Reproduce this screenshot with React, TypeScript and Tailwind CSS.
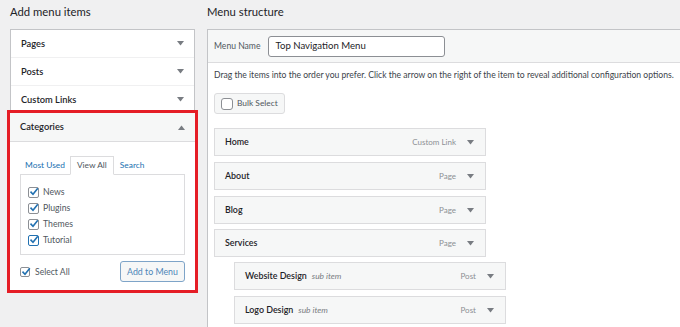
import React from "react";

type MenuItem = {
  title: string;
  type: string;
  sub?: boolean;
};

const menuItems: MenuItem[] = [
  { title: "Home", type: "Custom Link" },
  { title: "About", type: "Page" },
  { title: "Blog", type: "Page" },
  { title: "Services", type: "Page" },
  { title: "Website Design", type: "Post", sub: true },
  { title: "Logo Design", type: "Post", sub: true },
];

const categories = [
  { name: "News", focus: false },
  { name: "Plugins", focus: false },
  { name: "Themes", focus: false },
  { name: "Tutorial", focus: true },
];

const Arrow = ({ up = false }: { up?: boolean }) => (
  <svg width="7" height="5" viewBox="0 0 7 5" className="shrink-0">
    <path d={up ? "M0 5 L3.5 0.5 L7 5 Z" : "M0 0 L3.5 4.5 L7 0 Z"} fill="#787c82" />
  </svg>
);

const Check = ({ focus = false, size = 11 }: { focus?: boolean; size?: number }) => (
  <span
    className={`relative flex shrink-0 items-center justify-center rounded-[2px] bg-white ${focus ? "border-[1.5px] border-[#2271b1]" : "border border-[#8c8f94]"}`}
    style={{ width: size, height: size }}
  >
    <svg width="10" height="9" viewBox="0 0 10 9" className="absolute -top-[1px] left-[0px]">
      <path d="M1.5 4.6 L4 7.2 L8.8 1.3" stroke="#2271b1" strokeWidth="1.6" fill="none" />
    </svg>
  </span>
);

const AccordionRow = ({ label }: { label: string }) => (
  <div className="flex h-[28px] items-center justify-between border-b border-[#f0f0f1] pl-[10px] pr-[10px]">
    <span className="text-[9.3px] font-semibold text-[#1d2327]">{label}</span>
    <Arrow />
  </div>
);

const App = () => {
  return (
    <div
      className="flex h-[327px] w-[680px] overflow-hidden bg-[#f0f0f1] text-[#1d2327]"
      style={{ fontFamily: 'Lato, "Noto Sans", sans-serif' }}
    >
      {/* left column */}
      <div className="ml-[10px] w-[185px] shrink-0">
        <h2 className="h-[29px] pt-[3px] text-[11.3px] leading-[18px]">Add menu items</h2>
        <div className="border border-b-0 border-[#c3c4c7] bg-white">
          <AccordionRow label="Pages" />
          <AccordionRow label="Posts" />
          <AccordionRow label="Custom Links" />
        </div>
        <div className="relative -mt-[1px] bg-white shadow-[0_1px_2px_rgba(0,0,0,0.15)] outline-[3px] outline-solid outline-[#e51d26]">
          <div className="flex h-[29px] items-center justify-between border-b border-[#dcdcde] bg-[#f6f7f7] px-[10px]">
            <span className="text-[9.3px] font-semibold">Categories</span>
            <Arrow up />
          </div>
          <div className="px-[10px] pb-[8px] pt-[14px]">
            <div className="flex items-end text-[8.4px] leading-[16px]">
              <span className="px-[5px] pb-[1px] text-[#2271b1]">Most Used</span>
              <span className="-mb-[1px] border border-b-white border-[#dcdcde] bg-white px-[6px] pb-[1px] text-[#50575e]">View All</span>
              <span className="px-[6px] pb-[1px] text-[#2271b1]">Search</span>
            </div>
            <div className="h-[81px] border border-[#dcdcde] px-[7px] pt-[9px]">
              {categories.map((c) => (
                <div key={c.name} className="flex h-[16px] items-center gap-[4px]">
                  <Check focus={c.focus} />
                  <span className="text-[8.7px] text-[#50575e]">{c.name}</span>
                </div>
              ))}
            </div>
            <div className="mt-[6px] flex items-center justify-between">
              <div className="mt-[2px] flex items-center gap-[5px]">
                <Check size={10} />
                <span className="text-[8.6px] text-[#50575e]">Select All</span>
              </div>
              <button className="h-[21px] w-[65px] rounded-[3px] border border-[#7ea4c8] bg-[#f6f7f7] text-[8.8px] text-[#4d86b8]">
                Add to Menu
              </button>
            </div>
          </div>
        </div>
      </div>

      {/* right column */}
      <div className="ml-[12px] flex-1">
        <h2 className="h-[29px] pt-[3px] text-[11.3px] leading-[18px]">Menu structure</h2>
        <div className="h-[320px] w-[500px] border border-[#c3c4c7] bg-white">
          <div className="flex h-[33px] items-center border-b border-[#dcdcde] bg-[#f6f7f7] px-[6px]">
            <span className="mr-[8px] text-[8.6px] text-[#50575e]">Menu Name</span>
            <div className="flex h-[21px] w-[177px] items-center rounded-[3px] border border-[#8c8f94] bg-white px-[6px] text-[9.6px]">
              Top Navigation Menu
            </div>
          </div>
          <div className="px-[6px] pt-[5px]">
            <p className="whitespace-nowrap text-[8.6px] leading-[14px] text-[#3c434a]">
              Drag the items into the order you prefer. Click the arrow on the right of the item to reveal additional configuration options.
            </p>
            <div className="mt-[11px] flex h-[21px] w-[71px] items-center gap-[4px] whitespace-nowrap rounded-[3px] border border-[#dcdcde] bg-[#f6f7f7] px-[6px]">
              <span className="h-[12px] w-[12px] shrink-0 rounded-[3px] border border-[#8c8f94] bg-white" />
              <span className="text-[8.4px] text-[#50575e]">Bulk Select</span>
            </div>
            <div className="mt-[14px] flex flex-col">
              {menuItems.map((m, i) => (
                <div
                  key={m.title}
                  className={`flex h-[28px] w-[272px] items-center justify-between border border-[#dcdcde] bg-[#f6f7f7] pl-[10px] pr-[11px] ${m.sub ? "ml-[20px]" : ""} ${i === 0 ? "" : i === 3 || i === 4 ? "mt-[5px]" : "mt-[6px]"}`}
                >
                  <span className="flex items-baseline gap-[5px]">
                    <span className="text-[8.9px] font-semibold text-[#1d2327]">{m.title}</span>
                    {m.sub && <span className="text-[8.4px] italic text-[#787c82]">sub item</span>}
                  </span>
                  <span className="flex items-center gap-[11px]">
                    <span className="text-[8px] text-[#8c8f94]">{m.type}</span>
                    <Arrow />
                  </span>
                </div>
              ))}
            </div>
          </div>
        </div>
      </div>
    </div>
  );
};

export default App;
